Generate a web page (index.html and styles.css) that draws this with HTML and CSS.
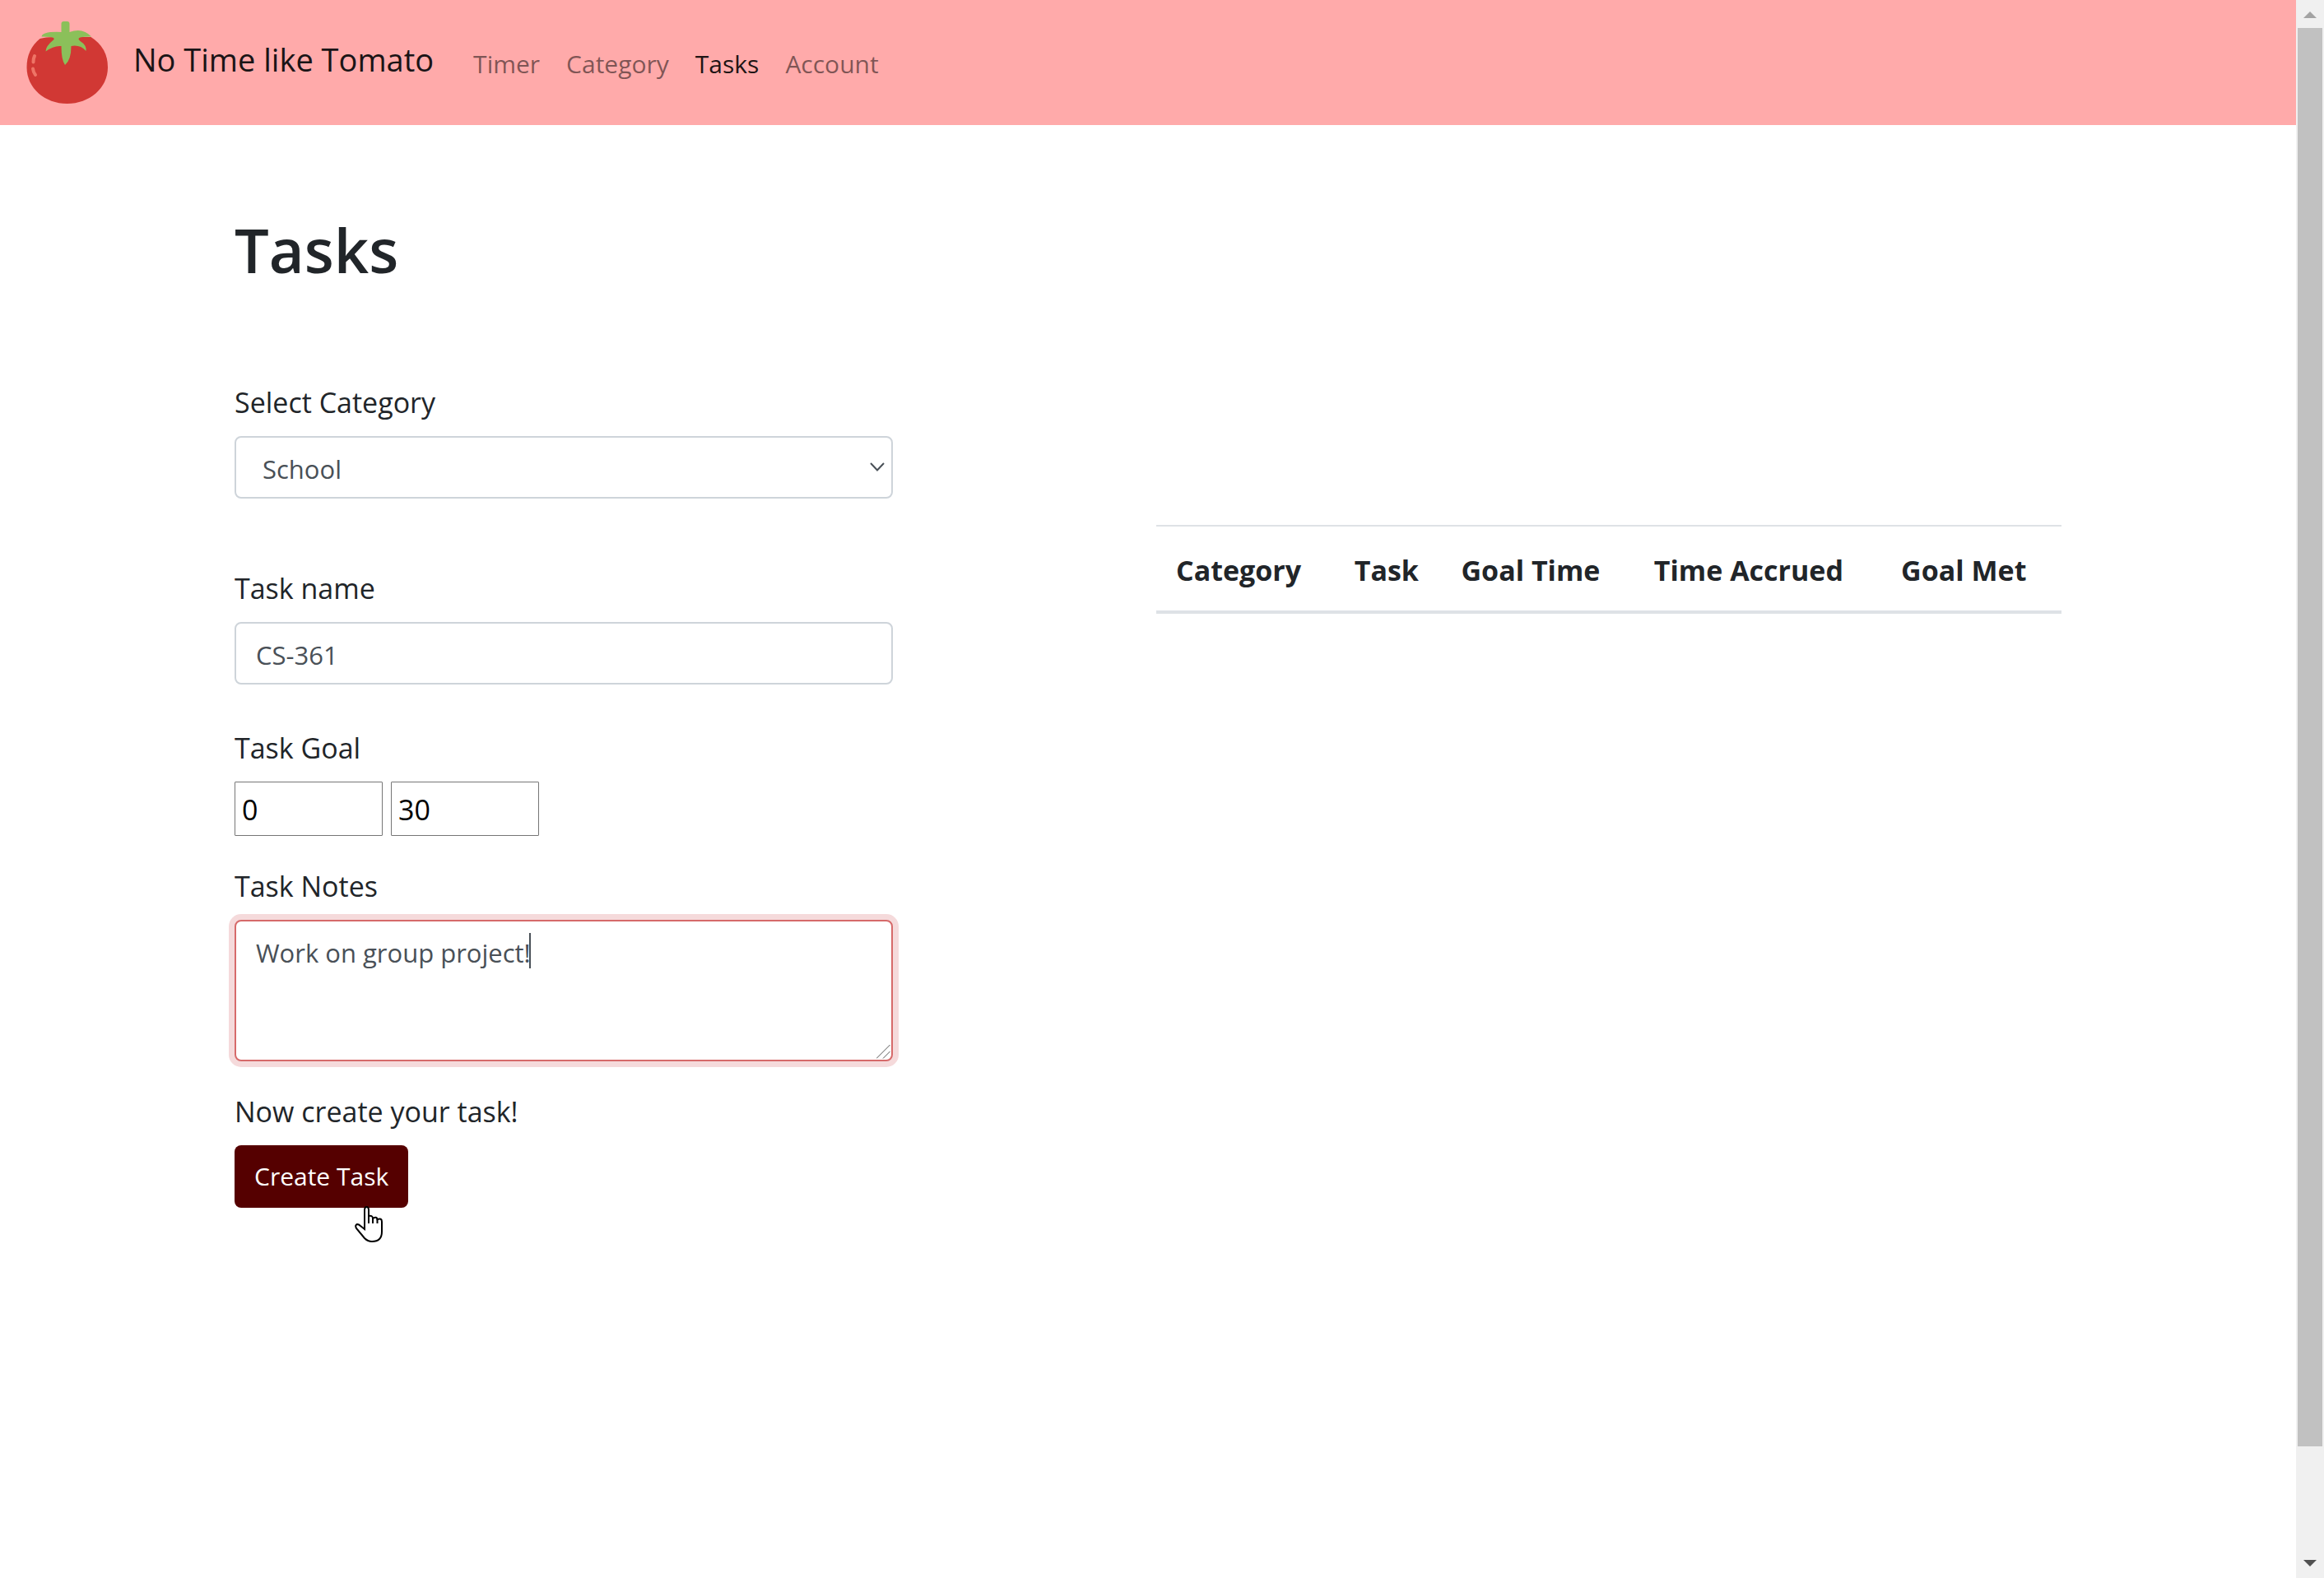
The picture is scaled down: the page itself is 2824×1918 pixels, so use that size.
FILE: index.html
```html
<!DOCTYPE html>
<html lang="en">
<head>
  <meta charset="utf-8">
  <title>No Time like Tomato - Tasks</title>
  <link rel="stylesheet" href="styles.css">
</head>
<body>
  <div class="page">
    <header class="navbar">
      <a class="brand" href="#">
        <svg class="brand-logo" viewBox="33 26 99 100" aria-hidden="true">
          <path fill="#d13834" d="M49 47Q56 45 66 45H111Q131.500 58 131.500 82C131.500 107 109 126 82 126C55 126 33 107 33 82Q33 60 49 47Z"/>
          <path fill="#8bc05a" d="M75 39V29Q75 26 78 26H82Q85 26 85 29V39Q101 33 111.500 44.500Q103 44.500 98 45.500Q94 47 98 50Q106 55 105 62Q98 54 87 56Q87 73 79.500 79Q75 73 75 56Q66 55 56 62.500Q56 56 66 48Q67 45.500 62 45Q57 44.500 51 44.500Q52 38 75 39Z"/>
          <path fill="none" stroke="#ee7466" stroke-width="4" stroke-linecap="round" d="M42.500 68Q41 71 41 75.500M40.500 83.500Q41 88 43.500 91"/>
        </svg>
        <span class="brand-name">No Time like Tomato</span>
      </a>
      <nav class="nav-links">
        <a class="nav-link" href="#">Timer</a>
        <a class="nav-link" href="#">Category</a>
        <a class="nav-link active" href="#" aria-current="page">Tasks</a>
        <a class="nav-link" href="#">Account</a>
      </nav>
    </header>

    <main class="container">
      <h1 class="title">Tasks</h1>
      <div class="columns">
        <form class="task-form">
          <div class="field field-category">
            <label class="label" for="category">Select Category</label>
            <div class="control-wrap">
              <select class="control select" id="category">
                <option>School</option>
              </select>
              <svg class="chevron" viewBox="0 0 18 12" aria-hidden="true"><path d="M1 1L9 9.500L17 1"/></svg>
            </div>
          </div>
          <div class="field field-name">
            <label class="label" for="name">Task name</label>
            <input class="control" id="name" type="text" value="CS-361">
          </div>
          <div class="field">
            <label class="label" for="hours">Task Goal</label>
            <div class="goal">
              <input class="goal-input" id="hours" type="text" value="0">
              <input class="goal-input" id="minutes" type="text" value="30" aria-label="Minutes">
            </div>
          </div>
          <div class="field">
            <label class="label" for="notes">Task Notes</label>
            <div class="control-wrap">
              <textarea class="control notes" id="notes">Work on group project!</textarea>
              <span class="caret"></span>
              <svg class="grip" viewBox="0 0 17 17" aria-hidden="true"><path d="M0 16.500L16.500 0M8 16.500L16.500 8"/></svg>
            </div>
          </div>
          <div class="field">
            <label class="label" for="create">Now create your task!</label>
            <div class="button-wrap">
              <button class="button" id="create" type="button">Create Task</button>
              <svg class="pointer" viewBox="0 0 34 44" aria-hidden="true">
                <path d="M12 28V5Q12 1 14.500 1Q17 1 17 5V12Q22 11 22 15Q27 12 27.500 16Q33 14 33 19V31Q33 43 21 43Q16 43 12 39L2 27Q0 23 3 22Q5 22 7 24L12 28Z"/>
                <path d="M17 12V21M22 14V21M27.500 15V21"/>
              </svg>
            </div>
          </div>
        </form>

        <table class="task-table">
          <colgroup>
            <col class="col-category"><col class="col-task"><col class="col-goal"><col class="col-accrued"><col class="col-met">
          </colgroup>
          <thead>
            <tr>
              <th scope="col">Category</th>
              <th scope="col">Task</th>
              <th scope="col">Goal Time</th>
              <th scope="col">Time Accrued</th>
              <th scope="col">Goal Met</th>
            </tr>
          </thead>
        </table>
      </div>
    </main>
  </div>

  <div class="scrollbar" aria-hidden="true">
    <svg class="scroll-arrow" viewBox="0 0 34 34"><path fill="#a3a3a3" d="M9 22L17 14L25 22Z"/></svg>
    <div class="scroll-track"><div class="scroll-thumb"></div></div>
    <svg class="scroll-arrow" viewBox="0 0 34 34"><path fill="#505050" d="M9 12L17 20L25 12Z"/></svg>
  </div>
</body>
</html>
```
FILE: styles.css
```css
* {
  box-sizing: border-box;
}

body {
  display: flex;
  min-height: 100vh;
  margin: 0;
  background: #fff;
  color: #212529;
  font-family: "Open Sans", "Noto Sans", sans-serif;
  font-size: 34px;
}

.page {
  flex: 1;
  min-width: 0;
}

/* Navigation bar */
.navbar {
  display: flex;
  align-items: center;
  gap: 32px;
  padding: 16px 32px;
  min-height: 152px;
  background: #ffaaaa;
}

.brand {
  display: flex;
  align-items: center;
  gap: 30px;
  color: #1a1416;
  text-decoration: none;
}

.brand-logo {
  width: 100px;
  height: 100px;
}

.brand-name {
  padding-bottom: 8px;
  font-size: 38px;
  line-height: 60px;
}

.nav-links {
  display: flex;
}

.nav-link {
  padding: 18px 16px 14px;
  color: rgba(0, 0, 0, 0.5);
  font-size: 30px;
  line-height: 48px;
  text-decoration: none;
}

.nav-link.active {
  color: rgba(0, 0, 0, 0.9);
}

/* Page content */
.container {
  max-width: 2280px;
  margin: 0 auto;
  padding: 104px 30px;
}

.title {
  margin: 0 0 108px;
  font-size: 74px;
  font-weight: 600;
  line-height: 96px;
}

.columns {
  display: grid;
  grid-template-columns: 8fr 11fr;
  align-items: start;
  gap: 320px;
}

/* Form */
.field {
  margin-bottom: 32px;
}

.field-category {
  margin-bottom: 80px;
}

.field-name {
  margin-bottom: 48px;
}

.label {
  display: block;
  margin-bottom: 12px;
  line-height: 58px;
}

.control-wrap {
  position: relative;
}

.control {
  display: block;
  width: 100%;
  height: 76px;
  padding: 14px 24px 10px;
  border: 2px solid #ced4da;
  border-radius: 8px;
  background: #fff;
  color: #495057;
  font-family: inherit;
  font-size: 31px;
  line-height: 48px;
}

.select {
  padding: 14px 32px 10px;
  appearance: none;
}

.chevron {
  position: absolute;
  top: 32px;
  right: 10px;
  width: 18px;
  height: 12px;
  fill: none;
  stroke: #495057;
  stroke-width: 2;
}

.goal {
  display: flex;
  gap: 10px;
}

.goal-input {
  width: 180px;
  height: 66px;
  padding: 4px 8px 2px;
  border: 1px solid #767676;
  border-radius: 1px;
  background: #fff;
  color: #000;
  font-family: inherit;
  font-size: 34px;
}

.notes {
  height: 172px;
  border-color: #d66a6a;
  box-shadow: 0 0 0 7px #f5dadb;
  resize: none;
}

.caret {
  position: absolute;
  top: 16px;
  left: 358px;
  width: 2px;
  height: 43px;
  background: #495057;
}

.grip {
  position: absolute;
  right: 3px;
  bottom: 3px;
  width: 17px;
  height: 17px;
  fill: none;
  stroke: #555;
  stroke-width: 1;
}

.button-wrap {
  position: relative;
  display: inline-block;
}

.button {
  height: 76px;
  padding: 14px 24px;
  border: 0;
  border-radius: 8px;
  background: #550000;
  color: #fff;
  font-family: inherit;
  font-size: 30px;
  line-height: 48px;
}

.pointer {
  position: absolute;
  top: 74px;
  left: 146px;
  width: 34px;
  height: 44px;
  fill: #fff;
  stroke: #000;
  stroke-width: 2;
}

/* Table */
.task-table {
  width: 100%;
  margin-top: 178px;
  border-collapse: collapse;
  table-layout: fixed;
}

.task-table th {
  padding: 26px 24px 22px;
  border-top: 2px solid #dee2e6;
  border-bottom: 4px solid #dee2e6;
  font-weight: 700;
  line-height: 54px;
  text-align: left;
  white-space: nowrap;
}

.col-category { width: 19.7%; }
.col-task { width: 11.8%; }
.col-goal { width: 21.3%; }
.col-accrued { width: 27.3%; }
.col-met { width: 19.9%; }

/* Scroll bar */
.scrollbar {
  display: flex;
  flex-direction: column;
  width: 34px;
  background: #f0f0f0;
}

.scroll-arrow {
  display: block;
  width: 34px;
  height: 34px;
}

.scroll-track {
  flex: 1;
  padding: 0 2px;
}

.scroll-thumb {
  height: 93.2%;
  background: #c1c1c1;
}
```
